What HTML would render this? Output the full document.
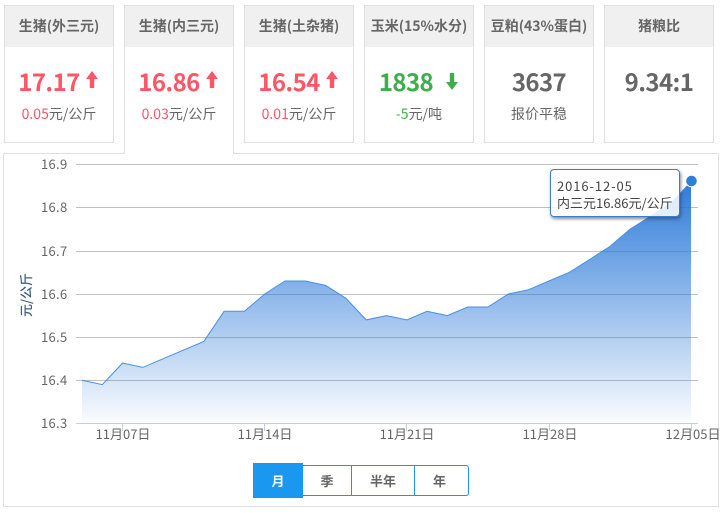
<!DOCTYPE html>
<html>
<head>
<meta charset="utf-8">
<style>
*{box-sizing:border-box;margin:0;padding:0}
html,body{width:724px;height:513px;background:#fff;overflow:hidden;font-family:"Noto Sans CJK SC","Liberation Sans",sans-serif;color:#666}
.box{position:absolute;left:3px;top:153px;width:716px;height:354px;border:1px solid #e0e0e0}
.c{position:absolute;top:5px;width:110px;height:138px;border:1px solid #e0e0e0;background:#fff;text-align:center}
.c.on{height:149px;border-bottom:0;z-index:2}
.h{height:41px;background:#f0f0f0;font-size:14px;font-weight:700;line-height:41px;color:#666;white-space:nowrap}
.n{position:absolute;left:0;right:0;top:58px;font-size:24px;font-weight:700;line-height:34px;white-space:nowrap;letter-spacing:-.6px}
.s{position:absolute;left:0;right:0;top:98px;font-size:14px;line-height:20px;color:#666;white-space:nowrap}
.r{color:#ff5564}.g{color:#3cae4b}
.n svg{position:absolute;top:7px}
svg.chart{position:absolute;left:0;top:0}
svg text{font-family:"Noto Sans CJK SC","Liberation Sans",sans-serif;font-size:13px;fill:#666}
.tip{position:absolute;left:550px;top:169px;width:130px;height:48px;background:rgba(255,255,255,.85);border:1px solid #3b7cc9;border-radius:4px;box-shadow:1px 2px 3px rgba(40,60,90,.6);font-size:13px;line-height:17px;padding:7px 0 0 6px;color:#444;white-space:nowrap;z-index:3}
.btn{position:absolute;top:465px;height:31px;border:1px solid #1a98f0;border-left:0;background:#fff;font-size:13px;font-weight:700;line-height:29px;text-align:center;color:#666}
</style>
</head>
<body>
<div class="box"></div>

<div class="c" style="left:4px"><div class="h">生猪(外三元)</div>
<div class="n r" style="padding-right:20px">17.17<svg style="left:81px" width="12" height="18" viewBox="0 0 12 18"><path d="M6 0L12 8H8.2V17H3.8V8H0Z" fill="#ff5564"/></svg></div>
<div class="s"><span class="r">0.05</span>元/公斤</div></div>

<div class="c on" style="left:124px"><div class="h">生猪(内三元)</div>
<div class="n r" style="padding-right:20px">16.86<svg style="left:81px" width="12" height="18" viewBox="0 0 12 18"><path d="M6 0L12 8H8.2V17H3.8V8H0Z" fill="#ff5564"/></svg></div>
<div class="s"><span class="r">0.03</span>元/公斤</div></div>

<div class="c" style="left:244px"><div class="h">生猪(土杂猪)</div>
<div class="n r" style="padding-right:20px">16.54<svg style="left:81px" width="12" height="18" viewBox="0 0 12 18"><path d="M6 0L12 8H8.2V17H3.8V8H0Z" fill="#ff5564"/></svg></div>
<div class="s"><span class="r">0.01</span>元/公斤</div></div>

<div class="c" style="left:364px"><div class="h">玉米(15%水分)</div>
<div class="n g" style="padding-right:26px">1838<svg style="left:81px;top:8px" width="12" height="18" viewBox="0 0 12 18"><path d="M6 18L12 10H8.2V1H3.8V10H0Z" fill="#3cae4b"/></svg></div>
<div class="s"><span class="g">-5</span>元/吨</div></div>

<div class="c" style="left:484px"><div class="h">豆粕(43%蛋白)</div>
<div class="n">3637</div>
<div class="s">报价平稳</div></div>

<div class="c" style="left:604px"><div class="h">猪粮比</div>
<div class="n">9.34:1</div></div>

<svg class="chart" width="724" height="513" viewBox="0 0 724 513">
<defs><linearGradient id="a" x1="0" y1="0" x2="0" y2="1">
<stop offset="0" stop-color="#2a78d8" stop-opacity=".98"/>
<stop offset="1" stop-color="#2a78d8" stop-opacity=".02"/>
</linearGradient></defs>
<g stroke="#c0c0c0" stroke-width="1">
<path d="M76 164.5H698M76 207.5H698M76 251.5H698M76 294.5H698M76 337.5H698M76 380.5H698"/>
</g>
<path d="M76 423.5H698M122.5 424V431M264.5 424V431M406.5 424V431M549.5 424V431M691.5 424V431" stroke="#c0d0e0" stroke-width="1" fill="none"/>
<path fill="url(#a)" d="M82 380.3L102.3 384.6L122.6 363.1L142.9 367.4L163.2 358.7L183.5 350.1L203.8 341.5L224.1 311.3L244.4 311.3L264.7 294L285 281L305.3 281L325.6 285.4L345.9 298.3L366.2 319.9L386.5 315.6L406.8 319.9L427.1 311.3L447.4 315.6L467.7 307L488 307L508.3 294L528.6 289.7L548.9 281L569.2 272.4L589.5 259.5L609.8 246.5L630.1 229.2L650.4 216.3L670.7 203.3L691 181.7V423.5H82Z"/>
<path fill="none" stroke="#4a8fe0" stroke-width="1" d="M82 380.3L102.3 384.6L122.6 363.1L142.9 367.4L163.2 358.7L183.5 350.1L203.8 341.5L224.1 311.3L244.4 311.3L264.7 294L285 281L305.3 281L325.6 285.4L345.9 298.3L366.2 319.9L386.5 315.6L406.8 319.9L427.1 311.3L447.4 315.6L467.7 307L488 307L508.3 294L528.6 289.7L548.9 281L569.2 272.4L589.5 259.5L609.8 246.5L630.1 229.2L650.4 216.3L670.7 203.3L691 181.7"/>
<circle cx="691.5" cy="181" r="5.8" fill="#2d7fdc" stroke="#fff" stroke-width="1"/>
<g text-anchor="end" style="letter-spacing:.3px">
<text x="67.5" y="169">16.9</text>
<text x="67.5" y="212">16.8</text>
<text x="67.5" y="256">16.7</text>
<text x="67.5" y="299">16.6</text>
<text x="67.5" y="342">16.5</text>
<text x="67.5" y="385">16.4</text>
<text x="67.5" y="428">16.3</text>
</g>
<g text-anchor="middle">
<text x="123" y="439">11月07日</text>
<text x="265" y="439">11月14日</text>
<text x="407" y="439">11月21日</text>
<text x="550" y="439">11月28日</text>
<text x="693" y="439" textLength="55">12月05日</text>
</g>
<text transform="translate(31 295) rotate(-90)" text-anchor="middle" style="font-size:13px;font-weight:500;fill:#3f5f85">元/公斤</text>
</svg>

<div class="tip"><span style="letter-spacing:.9px">2016-12-05</span><br>内三元16.86元/公斤</div>

<div style="position:absolute;left:253px;top:463px;width:50px;height:35px;background:#1a98f0;color:#fff;font-size:13px;font-weight:700;line-height:35px;text-align:center">月</div>
<div class="btn" style="left:303px;width:49px">季</div>
<div class="btn" style="left:352px;width:63px">半年</div>
<div class="btn" style="left:415px;width:54px;padding-right:4px;border-radius:0 3px 3px 0">年</div>
</body>
</html>
